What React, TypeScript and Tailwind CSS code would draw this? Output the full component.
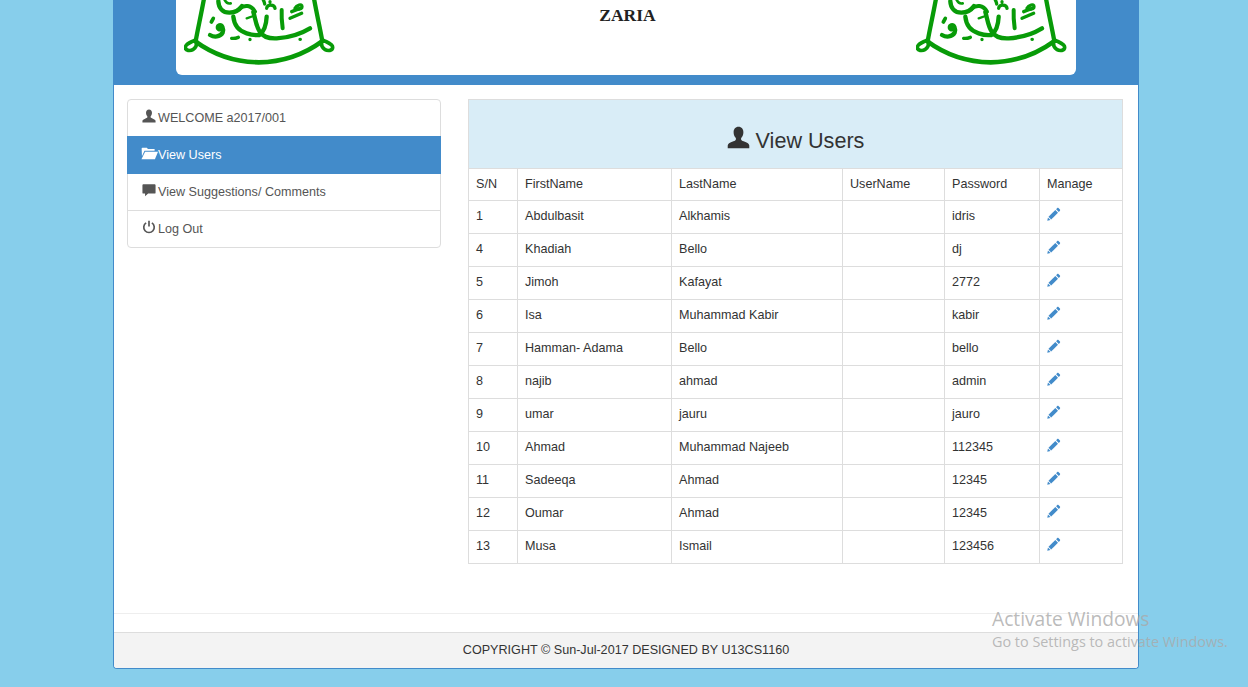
import { ComponentType } from 'react';

// glyphicon-style icons, drawn on a 16 unit box
function UserIcon({ className }: { className?: string }) {
  return (
    <svg viewBox="0 0 16 16" className={className} fill="currentColor">
      <path d="M8 .5c-2.200 0-3.400 1.700-3.400 3.800 0 1.600.6 3 1.400 3.900.3.400.3 1.200 0 1.600-.3.500-1.200.8-2.400 1.200C1.800 11.700.700 12.400.500 13.500V15.500h15v-2c-.2-1.100-1.300-1.800-3.100-2.500-1.200-.4-2.100-.7-2.400-1.200-.3-.4-.3-1.200 0-1.600.8-.9 1.400-2.300 1.400-3.900C11.400 2.200 10.200.5 8 .5z" />
    </svg>
  );
}

function FolderOpenIcon({ className }: { className?: string }) {
  return (
    <svg viewBox="0 0 16 16" className={className} fill="currentColor">
      <path d="M1.300 2.500h4.200l1 1.300h6.300v1.700H3.300L.9 10.500 .6 3.200c0-.4.300-.7.700-.7z" />
      <path d="M3.900 6.300H16l-2.900 7.200H.4z" />
    </svg>
  );
}

function CommentIcon({ className }: { className?: string }) {
  return (
    <svg viewBox="0 0 16 16" className={className} fill="currentColor">
      <path d="M1.500 1.500h13c.6 0 1 .4 1 1v8.500c0 .6-.4 1-1 1H7l-3.500 3v-3h-2c-.6 0-1-.4-1-1V2.500c0-.6.400-1 1-1z" />
    </svg>
  );
}

function PowerIcon({ className }: { className?: string }) {
  return (
    <svg viewBox="0 0 16 16" className={className} fill="none" stroke="currentColor" strokeWidth="1.900">
      <path d="M4.700 3.300a6 6 0 1 0 6.600 0" />
      <path d="M8 .8v6.700" />
    </svg>
  );
}

function PencilIcon({ className }: { className?: string }) {
  return (
    <svg viewBox="0 0 16 16" className={className} fill="currentColor">
      <path d="M11.700 1.200c.4-.4 1-.4 1.400 0l1.700 1.700c.4.4.4 1 0 1.400l-1.300 1.300-3.100-3.100z" />
      <path d="M9.500 3.400l3.100 3.100-7.800 7.800-3.100-3.100z" />
      <path d="M1.100 12l2.900 2.900-3.700.8z" />
    </svg>
  );
}

// university crest, the top of it runs off the page. traced at 3x so the numbers read off a zoomed crop
function Crest({ className }: { className?: string }) {
  return (
    <svg viewBox="24 0 456 195" className={className} fill="none" stroke="#089b08" strokeLinecap="round" strokeLinejoin="round">
      {/* shield and ears */}
      <path strokeWidth="13" d="M84 -4C76 40 66 85 60 118M414 -4c8 44 18 89 24 122" />
      <path strokeWidth="14" d="M58 124C110 162 170 186 248 187c76-1 138-25 190-63" />
      <path strokeWidth="11" d="M60 118c-10 8-32 12-32 24 0 10 14 12 24 6 10-7 12-18 8-30zM438 118c10 8 32 12 32 24 0 10-14 12-24 6-10-7-12-18-8-30z" />
      {/* calligraphy */}
      <path strokeWidth="13" d="M127 4C128 24 140 38 160 38 178 38 190 30 198 18" />
      <path strokeWidth="12" d="M192 25C205 14 225 14 237 35" />
      <path strokeWidth="8" d="M146 0c4 8 10 12 18 10" />
      <path strokeWidth="13" d="M102 105C114 112 132 112 140 98 144 86 138 74 130 76 124 78 124 86 130 88" />
      <path strokeWidth="11" d="M112 55L106 66" />
      <path strokeWidth="13" d="M172 50C174 72 186 92 212 100 224 104 236 106 247 105" />
      <path strokeWidth="13" d="M272 50C271 72 268 92 250 105" />
      <path strokeWidth="13" d="M402 85C384 96 350 112 302 115 280 116 262 112 252 96 240 80 238 55 232 36" />
      <path strokeWidth="12" d="M317 30C316 50 318 70 320 85" />
      <path strokeWidth="10" d="M342 55L377 40M347 35L372 25" />
      <path strokeWidth="10" d="M357 25C362 15 378 10 378 20 378 28 366 28 360 28" />
      <path strokeWidth="10" d="M272 25C272 12 296 12 297 25M282 5v1M262 0c2 4 4 8 4 12" />
      <path strokeWidth="7" d="M212 55L232 48" />
      <path strokeWidth="10" d="M222 118v.5M372 118h1M167 115C175 116 182 114 187 112" />
    </svg>
  );
}

const users = [
  { id: 1, first: 'Abdulbasit', last: 'Alkhamis', password: 'idris' },
  { id: 4, first: 'Khadiah', last: 'Bello', password: 'dj' },
  { id: 5, first: 'Jimoh', last: 'Kafayat', password: '2772' },
  { id: 6, first: 'Isa', last: 'Muhammad Kabir', password: 'kabir' },
  { id: 7, first: 'Hamman- Adama', last: 'Bello', password: 'bello' },
  { id: 8, first: 'najib', last: 'ahmad', password: 'admin' },
  { id: 9, first: 'umar', last: 'jauru', password: 'jauro' },
  { id: 10, first: 'Ahmad', last: 'Muhammad Najeeb', password: '112345' },
  { id: 11, first: 'Sadeeqa', last: 'Ahmad', password: '12345' },
  { id: 12, first: 'Oumar', last: 'Ahmad', password: '12345' },
  { id: 13, first: 'Musa', last: 'Ismail', password: '123456' },
];

const menu: { label: string; Icon: ComponentType<{ className?: string }>; row: string; active?: boolean }[] = [
  { label: 'WELCOME a2017/001', Icon: UserIcon, row: 'h-[36px] text-[#555]' },
  { label: 'View Users', Icon: FolderOpenIcon, row: 'h-[38px] -mx-px bg-[#428bca] text-white', active: true },
  { label: 'View Suggestions/ Comments', Icon: CommentIcon, row: 'h-[37px] border-b border-[#ddd] text-[#555]' },
  { label: 'Log Out', Icon: PowerIcon, row: 'h-[36px] text-[#555]' },
];

const cell = 'border border-[#ddd] px-[7px] pt-0 pb-[2px] text-left font-normal align-middle';

export default function App() {
  return (
    <div className="h-[687px] overflow-hidden bg-[#87ceeb] font-['Liberation_Sans',Arial,sans-serif] text-[12.6px] text-[#333]">
      <div className="relative ml-[113px] flex h-[669px] w-[1026px] flex-col rounded-b-[4px] border border-t-0 border-[#428bca] bg-white">
        {/* Banner */}
        <div className="h-[85px] shrink-0 bg-[#428bca] pl-[62px]">
          <div className="flex h-[75px] w-[900px] items-start justify-between overflow-hidden rounded-b-[6px] bg-white px-[8px]">
            <Crest className="h-[65px] w-[152px]" />
            <span className="mt-[5px] ml-[3px] font-['Liberation_Serif',serif] text-[17.500px] font-bold leading-[20px] text-[#222]">ZARIA</span>
            <Crest className="h-[65px] w-[152px]" />
          </div>
        </div>

        {/* Body */}
        <div className="flex flex-1 items-start pl-[13px] pr-[15px] pt-[14px]">
          <div className="flex w-[314px] shrink-0 flex-col rounded-[4px] border border-[#ddd] bg-white">
            {menu.map(({ label, Icon, row, active }) => (
              <div key={label} className={`flex items-center px-[14px] ${row}`}>
                <Icon className={`-translate-y-[2px] ${active ? 'h-[17px] w-[17px]' : 'mr-[2px] h-[14px] w-[14px]'}`} />
                <span>{label}</span>
              </div>
            ))}
          </div>

          <div className="ml-[27px] w-[655px]">
            <div className="flex h-[69px] items-end justify-center border border-b-0 border-[#ddd] bg-[#d9edf7] pb-[14px] text-[21.600px] leading-[26px]">
              <UserIcon className="mr-[6px] mb-[5px] h-[23px] w-[23px]" />
              View Users
            </div>
            <table className="w-[654px] table-fixed border-collapse leading-[20px]">
              <colgroup>
                <col className="w-[49px]" />
                <col className="w-[154px]" />
                <col className="w-[171px]" />
                <col className="w-[102px]" />
                <col className="w-[95px]" />
                <col className="w-[83px]" />
              </colgroup>
              <thead>
                <tr className="h-[32px]">
                  <th className={cell}>S/N</th>
                  <th className={cell}>FirstName</th>
                  <th className={cell}>LastName</th>
                  <th className={cell}>UserName</th>
                  <th className={cell}>Password</th>
                  <th className={cell}>Manage</th>
                </tr>
              </thead>
              <tbody>
                {users.map((u) => (
                  <tr key={u.id} className="h-[33px]">
                    <td className={cell}>{u.id}</td>
                    <td className={cell}>{u.first}</td>
                    <td className={cell}>{u.last}</td>
                    <td className={cell}></td>
                    <td className={cell}>{u.password}</td>
                    <td className={cell}>
                      <PencilIcon className="h-[14px] w-[14px] -translate-y-[2px] text-[#428bca]" />
                    </td>
                  </tr>
                ))}
              </tbody>
            </table>
          </div>
        </div>

        {/* Footer */}
        <div className="mb-[18px] h-px bg-[#eee]" />
        <div className="flex h-[36px] items-center justify-center rounded-b-[3px] border-t border-[#ddd] bg-[#f3f3f3]">
          COPYRIGHT © Sun-Jul-2017 DESIGNED BY U13CS1160
        </div>
      </div>

      {/* Windows watermark sits over the page */}
      <div className="pointer-events-none absolute left-[992px] top-[606px] font-['Open_Sans',sans-serif] text-[#a9a9a9]/80">
        <div className="text-[19.200px] leading-[26px]">Activate Windows</div>
        <div className="text-[14.400px] leading-[20px]">Go to Settings to activate Windows.</div>
      </div>
    </div>
  );
}
